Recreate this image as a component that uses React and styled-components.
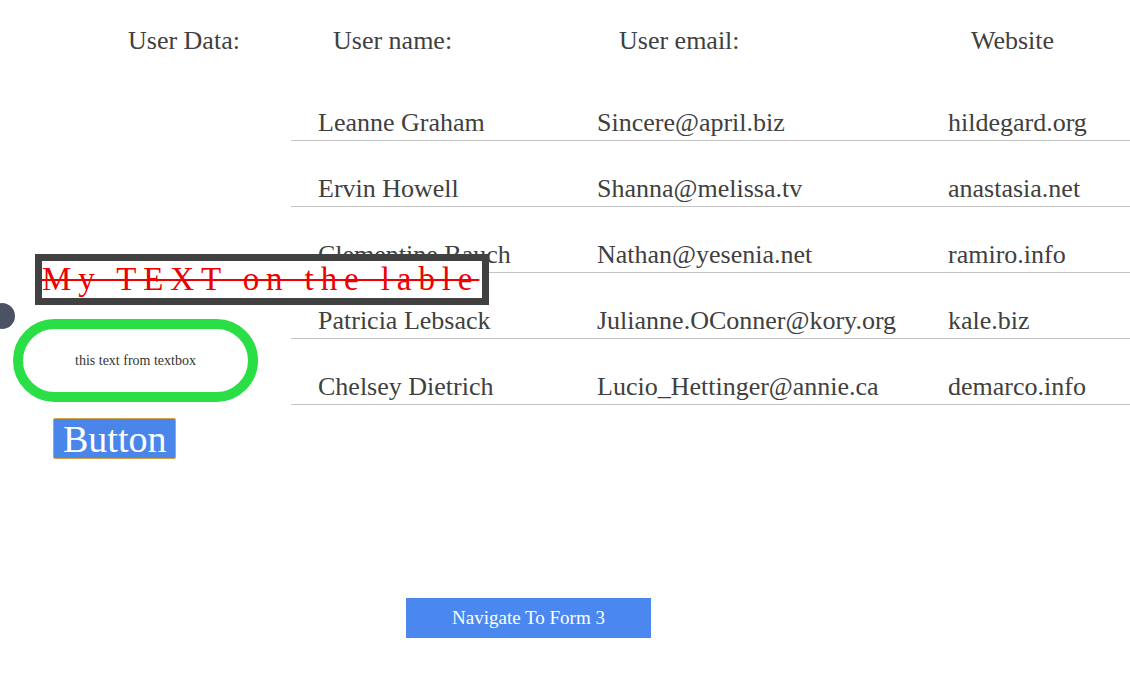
import React from "react";
import styled, { createGlobalStyle } from "styled-components";

const Global = createGlobalStyle`
  html, body { margin: 0; padding: 0; background: #fff; }
  body { font-family: "Liberation Serif", "Times New Roman", serif; color: #404040; }
`;

const Page = styled.div`
  position: relative;
  width: 1130px;
  height: 684px;
  overflow: hidden;
`;

const Dot = styled.div`
  position: absolute;
  left: -11px;
  top: 303px;
  width: 26px;
  height: 26px;
  border-radius: 50%;
  background: #4b5264;
`;

const cols = "291px 279px 351px 1fr";

const HeaderRow = styled.div`
  display: grid;
  grid-template-columns: ${cols};
  height: 75px;
  box-sizing: border-box;
  padding-top: 26px;
`;

const HeadCell = styled.div`
  font-size: 26px;
  line-height: 30px;
  padding-left: ${(p) => p.$pad}px;
  white-space: nowrap;
`;

const Body = styled.div`
  display: flex;
  align-items: flex-start;
`;

const LeftPanel = styled.div`
  width: 291px;
  flex: none;
  display: flex;
  flex-direction: column;
  align-items: flex-start;
`;

const LabelBox = styled.div`
  position: relative;
  z-index: 1;
  margin: 179px 0 0 35px;
  width: 454px;
  height: 51px;
  box-sizing: border-box;
  border: 7px solid #414141;
  background: #fff;
  overflow: hidden;
  white-space: nowrap;
  color: #ee0000;
  font-size: 33px;
  line-height: 37px;
  letter-spacing: 6.9px;
  text-decoration: line-through;
  text-decoration-thickness: 2px;
`;

const TextBox = styled.div`
  margin: 14px 0 0 13px;
  width: 245px;
  height: 83px;
  box-sizing: border-box;
  border: 10px solid #2ade45;
  border-radius: 42px;
  display: flex;
  align-items: center;
  justify-content: center;
  font-size: 14px;
  color: #333;
`;

const SmallButton = styled.button`
  margin: 16px 0 0 53px;
  height: 41px;
  padding: 0 9px;
  box-sizing: border-box;
  border: 1.5px solid #d6a245;
  border-radius: 2px;
  background: #4a86ea;
  color: #fff;
  font-family: "Liberation Serif", "Times New Roman", serif;
  font-size: 38px;
  line-height: 1;
`;

const Table = styled.div`
  flex: 1;
  display: flex;
  flex-direction: column;
`;

const Row = styled.div`
  display: grid;
  grid-template-columns: 279px 351px 1fr;
  height: 66px;
  box-sizing: border-box;
  border-bottom: 1px solid #c4c4c4;
  align-items: end;
  padding-bottom: 2px;
`;

const Cell = styled.div`
  font-size: 26px;
  line-height: 30px;
  padding-left: 27px;
  white-space: nowrap;
`;

const Footer = styled.div`
  display: flex;
  padding: 139px 0 0 406px;
`;

const NavButton = styled.button`
  width: 245px;
  height: 40px;
  border: none;
  background: #4a88ef;
  color: #fff;
  font-family: "Liberation Serif", "Times New Roman", serif;
  font-size: 19px;
  cursor: pointer;
`;

const users = [
  ["Leanne Graham", "Sincere@april.biz", "hildegard.org"],
  ["Ervin Howell", "Shanna@melissa.tv", "anastasia.net"],
  ["Clementine Bauch", "Nathan@yesenia.net", "ramiro.info"],
  ["Patricia Lebsack", "Julianne.OConner@kory.org", "kale.biz"],
  ["Chelsey Dietrich", "Lucio_Hettinger@annie.ca", "demarco.info"],
];

export default function App() {
  return (
    <>
      <Global />
      <Page>
        <HeaderRow>
          <HeadCell $pad={128}>User Data:</HeadCell>
          <HeadCell $pad={42}>User name:</HeadCell>
          <HeadCell $pad={49}>User email:</HeadCell>
          <HeadCell $pad={50}>Website</HeadCell>
        </HeaderRow>
        <Body>
          <LeftPanel>
            <LabelBox>My TEXT on the lable</LabelBox>
            <TextBox>this text from textbox</TextBox>
            <SmallButton>Button</SmallButton>
          </LeftPanel>
          <Table>
            {users.map((u) => (
              <Row key={u[0]}>
                <Cell>{u[0]}</Cell>
                <Cell>{u[1]}</Cell>
                <Cell>{u[2]}</Cell>
              </Row>
            ))}
          </Table>
        </Body>
        <Footer>
          <NavButton>Navigate To Form 3</NavButton>
        </Footer>
        <Dot />
      </Page>
    </>
  );
}
